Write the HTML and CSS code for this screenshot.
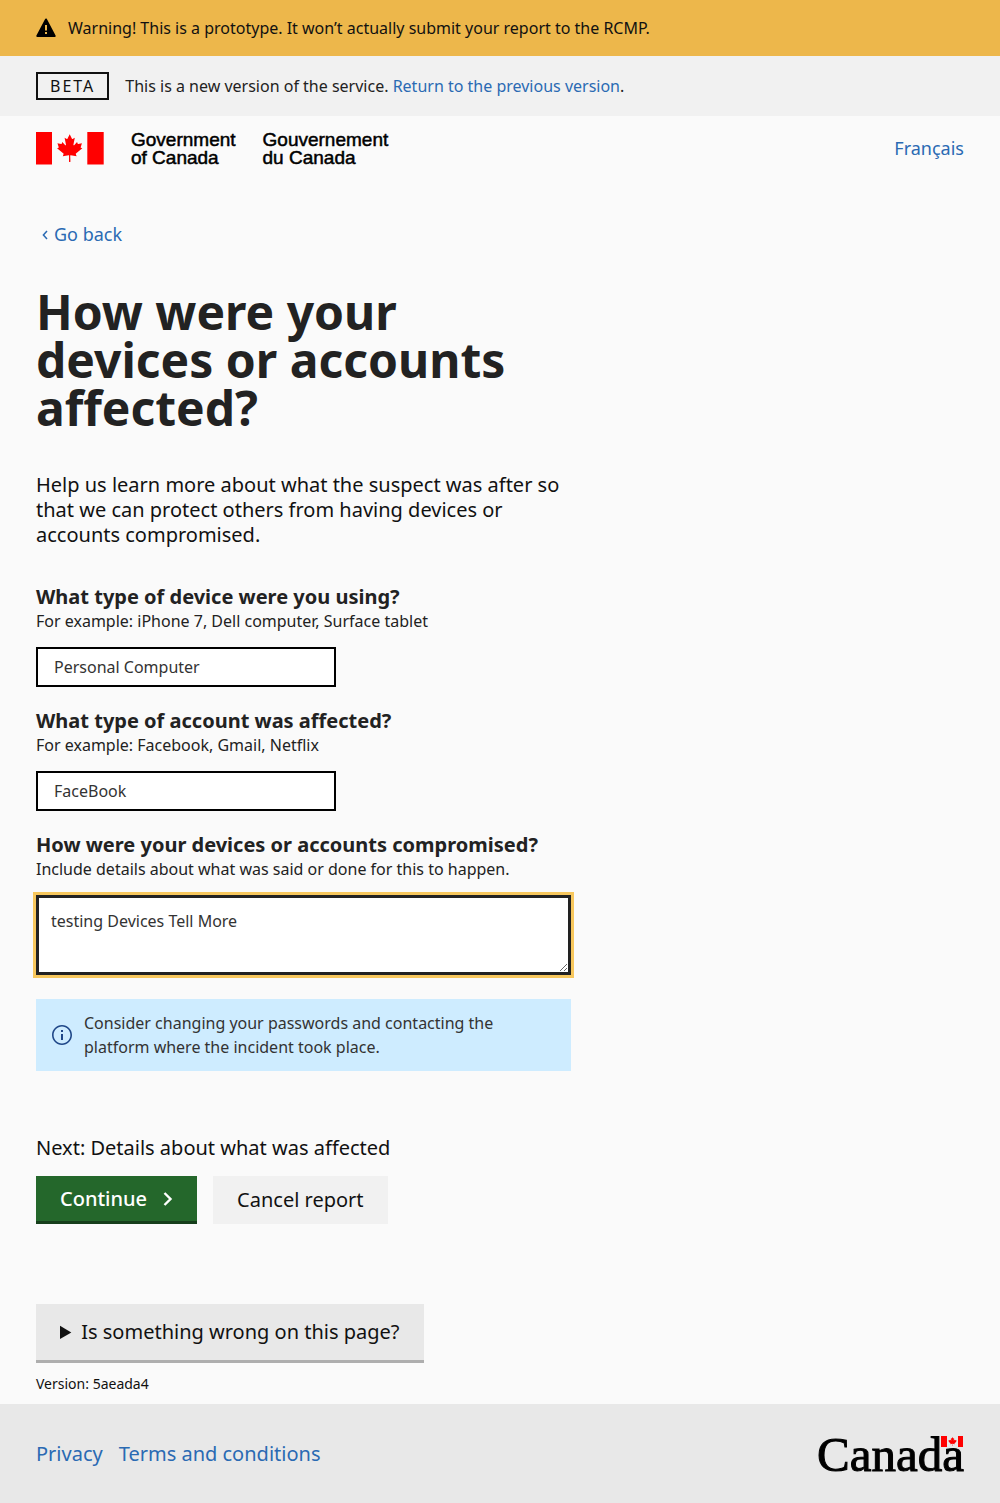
FILE: index.html
```html
<!DOCTYPE html>
<html lang="en">
<head>
  <meta charset="utf-8">
  <meta name="viewport" content="width=device-width, initial-scale=1">
  <title>How were your devices or accounts affected?</title>
  <link rel="stylesheet" href="styles.css">
</head>
<body>
  <svg class="sprite" aria-hidden="true">
    <symbol id="maple-leaf" viewBox="-2015 -2000 4030 4030">
      <path d="m-90 2030 45-863a95 95 0 0 0-111-98l-859 151 116-320a65 65 0 0 0-20-73l-941-762 212-99a65 65 0 0 0 34-79l-186-572 542 115a65 65 0 0 0 73-38l105-247 423 454a65 65 0 0 0 111-57l-204-1052 327 189a65 65 0 0 0 91-27l332-652 332 652a65 65 0 0 0 91 27l327-189-204 1052a65 65 0 0 0 111 57l423-454 105 247a65 65 0 0 0 73 38l542-115-186 572a65 65 0 0 0 34 79l212 99-941 762a65 65 0 0 0-20 73l116 320-859-151a95 95 0 0 0-111 98l45 863z" fill="#f00"/>
    </symbol>
  </svg>

  <div class="banner banner-warning">
    <svg class="icon-warning" width="20" height="20" viewBox="0 0 20 20" aria-hidden="true">
      <path d="M10 1.5 18.7 18H1.3z" fill="#000" stroke="#000" stroke-width="2" stroke-linejoin="round"/>
      <path d="M9 7h2v5.5H9zM9 14h2v2H9z" fill="#edb74b"/>
    </svg>
    <p>Warning! This is a prototype. It won’t actually submit your report to the RCMP.</p>
  </div>

  <div class="banner banner-phase">
    <span class="phase-tag">BETA</span>
    <p>This is a new version of the service. <a href="#previous">Return to the previous version</a>.</p>
  </div>

  <header class="header">
    <div class="signature">
      <svg width="68" height="33" viewBox="0 0 68 33" aria-hidden="true">
        <path d="M0 0h16v32.6H0zM51.3 0h16.4v32.6H51.3z" fill="#f00"/>
        <use href="#maple-leaf" x="20" y="2" width="27.4" height="28"/>
        <path d="M33.200 20h1v10h-1z" fill="#f00"/>
      </svg>
      <span>Government<br>of Canada</span>
      <span lang="fr">Gouvernement<br>du Canada</span>
    </div>
    <a class="language" href="#fr">Français</a>
  </header>

  <main class="main">
    <a class="back" href="#back">
      <svg width="6" height="10" viewBox="0 0 6 10" aria-hidden="true"><path d="M5 2 1.400 6 5 10" fill="none" stroke="currentColor" stroke-width="1.500"/></svg>
      Go back
    </a>

    <h1>How were your devices or accounts affected?</h1>
    <p class="lead">Help us learn more about what the suspect was after so that we can protect others from having devices or accounts compromised.</p>

    <form class="form">
      <div class="field">
        <label for="device">What type of device were you using?</label>
        <p class="hint" id="device-hint">For example: iPhone 7, Dell computer, Surface tablet</p>
        <input class="text-input" id="device" type="text" value="Personal Computer" aria-describedby="device-hint">
      </div>
      <div class="field">
        <label for="account">What type of account was affected?</label>
        <p class="hint" id="account-hint">For example: Facebook, Gmail, Netflix</p>
        <input class="text-input" id="account" type="text" value="FaceBook" aria-describedby="account-hint">
      </div>
      <div class="field">
        <label for="more">How were your devices or accounts compromised?</label>
        <p class="hint" id="more-hint">Include details about what was said or done for this to happen.</p>
        <textarea class="text-area is-active" id="more" aria-describedby="more-hint">testing Devices Tell More</textarea>
      </div>

      <div class="info">
        <svg width="24" height="24" viewBox="0 0 24 24" aria-hidden="true">
          <path d="M11 17h2v-6h-2v6zm1-15C6.48 2 2 6.480 2 12s4.480 10 10 10 10-4.480 10-10S17.520 2 12 2zm0 18.400c-4.640 0-8.400-3.760-8.400-8.400S7.360 3.600 12 3.600s8.400 3.760 8.400 8.400-3.760 8.400-8.400 8.400zM11 9h2V7h-2v2z" fill="#1f4788"/>
        </svg>
        <p>Consider changing your passwords and contacting the platform where the incident took place.</p>
      </div>

      <p class="next">Next: Details about what was affected</p>
      <div class="actions">
        <button class="button button-primary" type="submit">
          Continue
          <svg width="10" height="14" viewBox="0 0 10 14" aria-hidden="true"><path d="M1.500 1 7.500 7l-6 6" fill="none" stroke="currentColor" stroke-width="2.400"/></svg>
        </button>
        <button class="button button-secondary" type="button">Cancel report</button>
      </div>
    </form>

    <details class="feedback">
      <summary>Is something wrong on this page?</summary>
    </details>
    <p class="version">Version: 5aeada4</p>
  </main>

  <footer class="footer">
    <nav class="footer-links" aria-label="Footer">
      <a href="#privacy">Privacy</a>
      <a href="#terms">Terms and conditions</a>
    </nav>
    <svg class="wordmark" width="147" height="36" viewBox="0 0 147 36" role="img" aria-label="Symbol of the Government of Canada">
      <text x="0" y="35">Canada</text>
      <path d="M123 0h25v12h-25z" fill="#e8e8e8"/>
      <path d="M124 0h6v11h-6zM141 0h5v11h-5z" fill="#f00"/>
      <use href="#maple-leaf" x="131" y="1" width="9" height="9"/>
    </svg>
  </footer>
</body>
</html>
```
FILE: styles.css
```css
* {
  box-sizing: border-box;
}

body {
  margin: 0;
  background: #fafafa;
  color: #111;
  font-family: "Noto Sans", sans-serif;
  font-size: 16px;
  line-height: 24px;
}

h1,
p {
  margin: 0;
}

a {
  color: #2a6ab3;
  text-decoration: none;
}

svg {
  flex: none;
  overflow: visible;
}

.sprite {
  display: none;
}

.banner {
  display: flex;
  align-items: center;
  padding: 16px 36px;
}

.banner-warning {
  gap: 12px;
  background: #edb74b;
}

.banner-phase {
  gap: 16px;
  background: #f1f1f1;
  color: #222;
}

.phase-tag {
  padding: 0 12px;
  border: 2px solid #111;
  color: #111;
  letter-spacing: 2px;
}

.header {
  display: flex;
  justify-content: space-between;
  align-items: flex-start;
  padding: 16px 36px;
}

.signature {
  display: flex;
  gap: 27px;
  height: 38px;
  color: #000;
  font-family: "Liberation Sans", Arial, sans-serif;
  font-size: 19px;
  line-height: 18px;
  -webkit-text-stroke: 0.5px #000;
}

.signature span {
  margin-top: -1px;
}

.language {
  margin-top: 4px;
  font-size: 18px;
}

.main {
  padding: 36px 36px 8px;
}

.back {
  display: flex;
  align-items: center;
  gap: 6px;
  width: max-content;
  padding-left: 6px;
  font-size: 18px;
}

h1 {
  max-width: 535px;
  margin-top: 42px;
  color: #222;
  font-size: 48px;
  font-weight: 700;
  line-height: 48px;
}

.lead {
  max-width: 535px;
  margin-top: 40px;
  font-size: 20px;
  line-height: 25px;
}

.form {
  max-width: 535px;
  margin-top: 38px;
}

.field {
  margin-bottom: 22px;
}

.field label {
  display: block;
  color: #222;
  font-size: 20px;
  font-weight: 700;
}

.hint {
  margin-bottom: 14px;
  color: #222;
}

.text-input {
  display: block;
  width: 300px;
  max-width: 100%;
  height: 40px;
  padding: 0 16px;
  border: 2px solid #000;
  border-radius: 0;
  background: #fff;
  color: #333;
  font: inherit;
}

.text-area {
  display: block;
  width: 100%;
  height: 80px;
  padding: 12px;
  border: 2px solid #000;
  border-radius: 0;
  background: #fff;
  color: #333;
  font: inherit;
  line-height: 22px;
}

.text-area:focus,
.text-area.is-active {
  border: 3px solid #222;
  outline: 3px solid #f7c75d;
}

.info {
  display: flex;
  align-items: center;
  gap: 10px;
  margin-top: 24px;
  padding: 12px 14px;
  background: #ceecff;
  color: #333;
}

.next {
  margin-top: 65px;
  font-size: 20px;
}

.actions {
  display: flex;
  gap: 16px;
  margin-top: 16px;
}

.button {
  display: flex;
  align-items: center;
  gap: 16px;
  height: 48px;
  padding: 0 24px;
  border: 0;
  font: inherit;
  font-size: 20px;
}

.button-primary {
  border-bottom: 3px solid #163e1b;
  background: #24672b;
  color: #fff;
  font-weight: 500;
}

.button-secondary {
  background: #f1f1f1;
  color: #111;
}

.feedback {
  width: max-content;
  max-width: 100%;
  margin-top: 80px;
}

.feedback summary {
  padding: 16px 24px;
  border-bottom: 3px solid #aeaeae;
  background: #e8e8e8;
  font-size: 20px;
}

.version {
  margin-top: 9px;
  font-size: 14px;
}

.footer {
  display: flex;
  justify-content: space-between;
  align-items: center;
  padding: 32px 36px 31px;
  background: #e8e8e8;
}

.footer-links {
  display: flex;
  gap: 16px;
  font-size: 20px;
}

.wordmark text {
  font-family: "Liberation Serif", "Times New Roman", serif;
  font-size: 49px;
  stroke: #000;
  stroke-width: 1px;
}
```
